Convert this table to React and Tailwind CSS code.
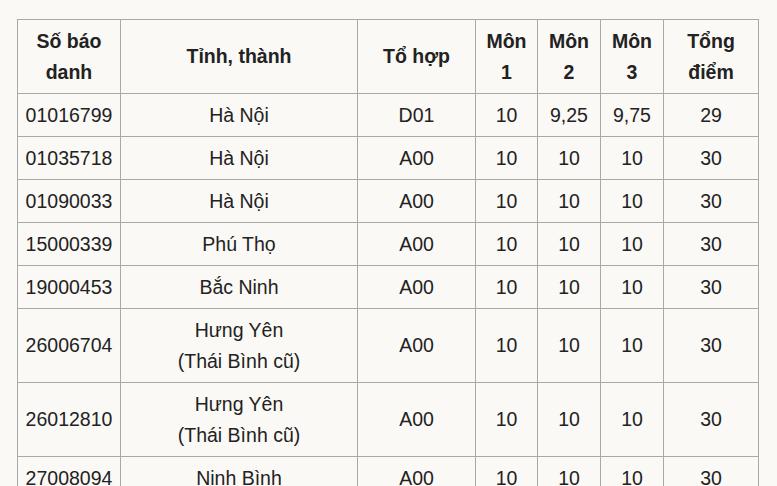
const rows = [
  ['01016799', ['Hà Nội'], 'D01', '10', '9,25', '9,75', '29'],
  ['01035718', ['Hà Nội'], 'A00', '10', '10', '10', '30'],
  ['01090033', ['Hà Nội'], 'A00', '10', '10', '10', '30'],
  ['15000339', ['Phú Thọ'], 'A00', '10', '10', '10', '30'],
  ['19000453', ['Bắc Ninh'], 'A00', '10', '10', '10', '30'],
  ['26006704', ['Hưng Yên', '(Thái Bình cũ)'], 'A00', '10', '10', '10', '30'],
  ['26012810', ['Hưng Yên', '(Thái Bình cũ)'], 'A00', '10', '10', '10', '30'],
  ['27008094', ['Ninh Bình'], 'A00', '10', '10', '10', '30'],
];

const td = 'border border-[#a9a9a9] px-1 py-[5.5px] text-center align-middle';

export default function App() {
  return (
    <div className="h-[486px] w-[777px] overflow-hidden bg-[#fbf9f6] pl-[17px] pt-[19px] font-['Liberation_Sans',Arial,sans-serif] text-[19.5px] leading-[31px] text-[#222]">
      <table className="w-[741px] table-fixed border-collapse">
        <colgroup>
          <col className="w-[103px]" />
          <col className="w-[237px]" />
          <col className="w-[118px]" />
          <col className="w-[62px]" />
          <col className="w-[63px]" />
          <col className="w-[63px]" />
          <col className="w-[95px]" />
        </colgroup>
        <thead>
          <tr className="font-bold">
            <th className={td}>Số báo<br />danh</th>
            <th className={td}>Tỉnh, thành</th>
            <th className={td}>Tổ hợp</th>
            <th className={td}>Môn<br />1</th>
            <th className={td}>Môn<br />2</th>
            <th className={td}>Môn<br />3</th>
            <th className={td}>Tổng<br />điểm</th>
          </tr>
        </thead>
        <tbody>
          {rows.map((r) => (
            <tr key={r[0]}>
              <td className={td}>{r[0]}</td>
              <td className={td}>
                {r[1].map((line) => (
                  <div key={line}>{line}</div>
                ))}
              </td>
              <td className={td}>{r[2]}</td>
              <td className={td}>{r[3]}</td>
              <td className={td}>{r[4]}</td>
              <td className={td}>{r[5]}</td>
              <td className={td}>{r[6]}</td>
            </tr>
          ))}
        </tbody>
      </table>
    </div>
  );
}
